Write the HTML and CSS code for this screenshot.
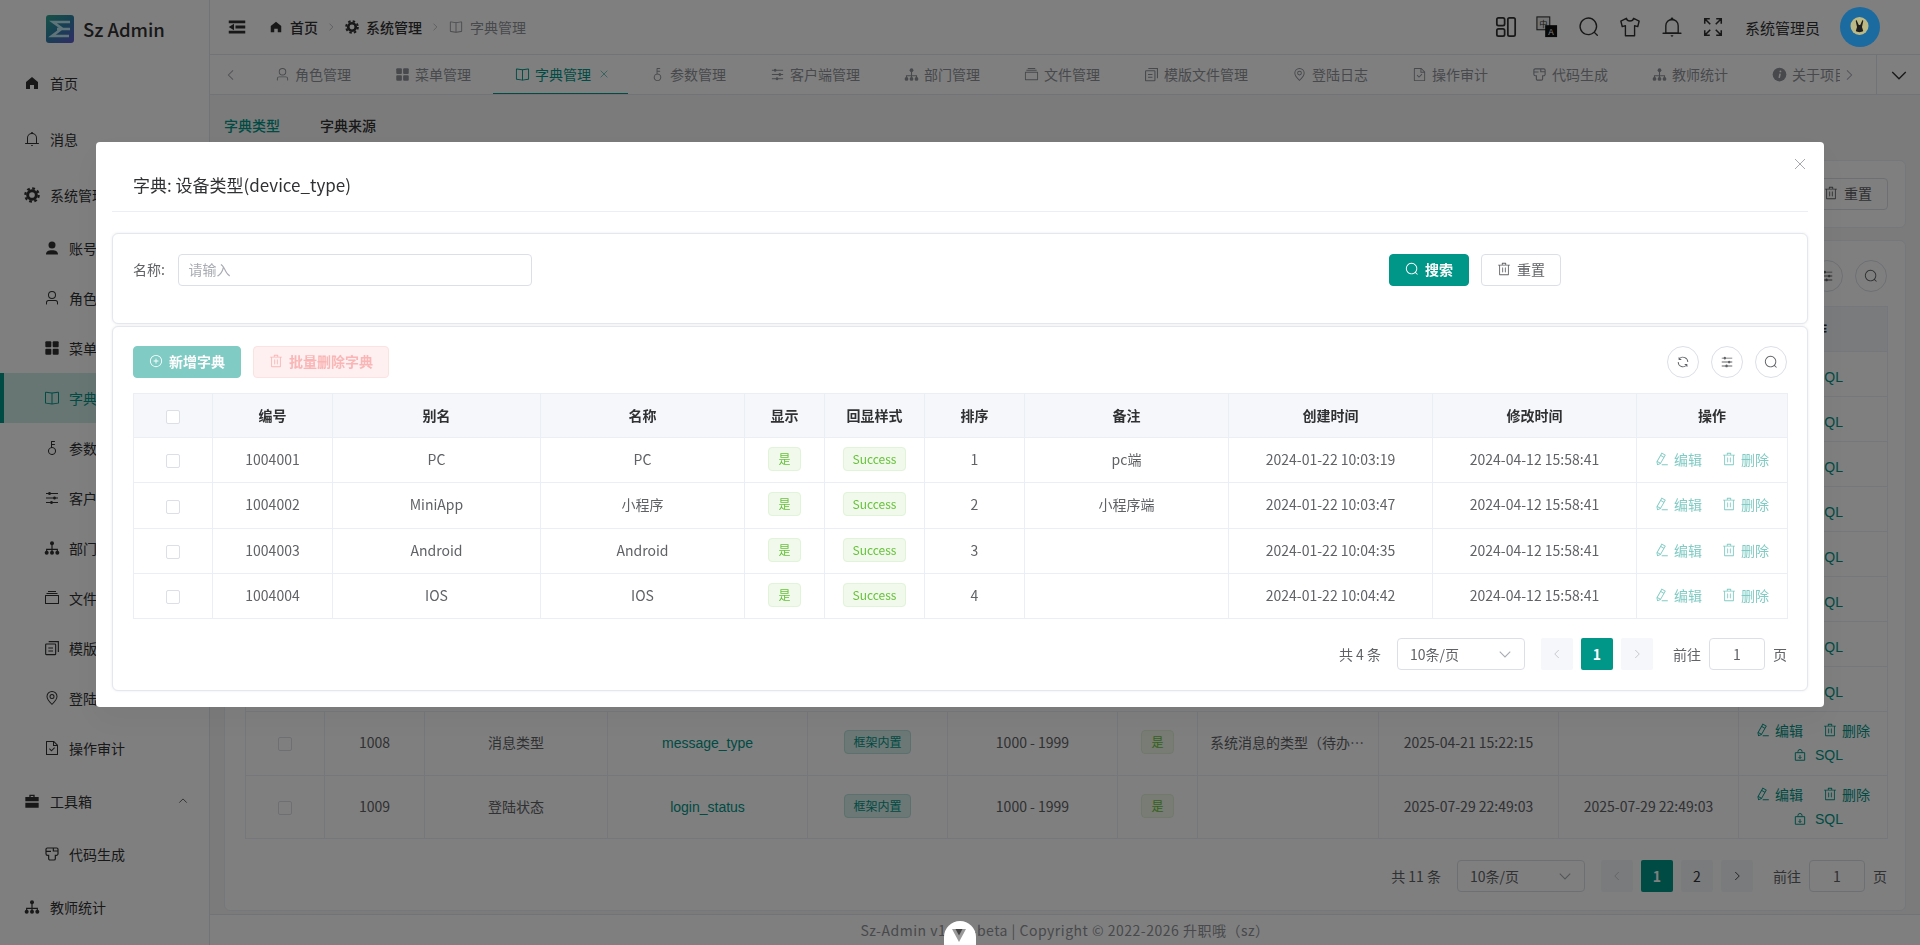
FILE: index.html
```html
<!DOCTYPE html>
<html lang="zh-CN">
<head>
  <meta charset="UTF-8" />
  <meta name="viewport" content="width=device-width, initial-scale=1.0"/>
  <title>Sz Admin - 字典管理</title>
  <link rel="stylesheet" href="styles.css">
</head>
<body>
  <svg class="sprite" xmlns="http://www.w3.org/2000/svg">
    <symbol id="i-home" viewBox="0 0 1024 1024"><path fill="currentColor" d="M512 128 128 447.936V896h255.936V640H640v256h255.936V447.936z"/></symbol>
    <symbol id="i-bell" viewBox="0 0 1024 1024"><path fill="currentColor" d="M512 64a64 64 0 0 1 64 64v64H448v-64a64 64 0 0 1 64-64"/><path fill="currentColor" d="M256 768h512V448a256 256 0 1 0-512 0zm256-640a320 320 0 0 1 320 320v384H192V448a320 320 0 0 1 320-320"/><path fill="currentColor" d="M96 768h832q32 0 32 32t-32 32H96q-32 0-32-32t32-32m352 128h128a64 64 0 0 1-128 0"/></symbol>
    <symbol id="i-gear" viewBox="0 0 24 24"><circle cx="12" cy="12" r="6.5" fill="none" stroke="currentColor" stroke-width="4.5"/><circle cx="12" cy="12" r="10" fill="none" stroke="currentColor" stroke-width="3.4" stroke-dasharray="4.2 3.65"/></symbol>
    <symbol id="i-user-fill" viewBox="0 0 1024 1024"><path fill="currentColor" d="M288 320a224 224 0 1 0 448 0 224 224 0 1 0-448 0"/><path fill="currentColor" d="M160 928a32 32 0 0 1-32-36c16-140 120-240 384-240s368 100 384 240a32 32 0 0 1-32 36z"/></symbol>
    <symbol id="i-user" viewBox="0 0 1024 1024"><path fill="currentColor" d="M512 512a192 192 0 1 0 0-384 192 192 0 0 0 0 384m0 64a256 256 0 1 1 0-512 256 256 0 0 1 0 512m320 320v-96a96 96 0 0 0-96-96H288a96 96 0 0 0-96 96v96a32 32 0 1 1-64 0v-96a160 160 0 0 1 160-160h448a160 160 0 0 1 160 160v96a32 32 0 1 1-64 0"/></symbol>
    <symbol id="i-menu" viewBox="0 0 24 24"><g fill="currentColor"><rect x="2" y="2" width="9" height="9" rx="1.5"/><rect x="13" y="2" width="9" height="9" rx="1.5"/><rect x="2" y="13" width="9" height="9" rx="1.5"/><rect x="13" y="13" width="9" height="9" rx="1.5"/></g></symbol>
    <symbol id="i-book" viewBox="0 0 1024 1024"><path fill="currentColor" d="m512 863.36 384-54.848v-638.72L525.568 222.72a96 96 0 0 1-27.136 0L128 169.792v638.72zM137.024 106.432l370.432 52.928a32 32 0 0 0 9.088 0l370.432-52.928A64 64 0 0 1 960 169.792v638.72a64 64 0 0 1-54.976 63.36l-388.48 55.488a32 32 0 0 1-9.088 0l-388.48-55.488A64 64 0 0 1 64 808.512v-638.72a64 64 0 0 1 73.024-63.36z"/><path fill="currentColor" d="M480 192h64v704h-64z"/></symbol>
    <symbol id="i-key" viewBox="0 0 1024 1024"><path fill="currentColor" d="M448 456.064V96a32 32 0 0 1 32-32.064L672 64a32 32 0 0 1 0 64H512v128h160a32 32 0 0 1 0 64H512v128a256 256 0 1 1-64 8.064M512 896a192 192 0 1 0 0-384 192 192 0 0 0 0 384"/></symbol>
    <symbol id="i-sliders" viewBox="0 0 1024 1024"><path fill="currentColor" d="M389.44 768a96.064 96.064 0 0 1 181.12 0H896v64H570.56a96.064 96.064 0 0 1-181.12 0H128v-64zm192-288a96.064 96.064 0 0 1 181.12 0H896v64H762.56a96.064 96.064 0 0 1-181.12 0H128v-64zm-320-288a96.064 96.064 0 0 1 181.12 0H896v64H442.56a96.064 96.064 0 0 1-181.12 0H128v-64z"/></symbol>
    <symbol id="i-dept" viewBox="0 0 24 24"><g fill="currentColor"><circle cx="12" cy="5" r="3"/><circle cx="4" cy="19" r="3"/><circle cx="12" cy="19" r="3"/><circle cx="20" cy="19" r="3"/></g><path d="M12 7v10M4 17v-3h16v3" fill="none" stroke="currentColor" stroke-width="1.8"/></symbol>
    <symbol id="i-files" viewBox="0 0 1024 1024"><path fill="currentColor" d="M128 384v448h768V384zm-32-64h832a32 32 0 0 1 32 32v512a32 32 0 0 1-32 32H96a32 32 0 0 1-32-32V352a32 32 0 0 1 32-32m64-128h704v64H160zm96-128h512v64H256z"/></symbol>
    <symbol id="i-template" viewBox="0 0 24 24"><g fill="none" stroke="currentColor" stroke-width="1.7"><rect x="2.5" y="6" width="15" height="16" rx="1"/><path d="M7 2.5h14.5V18M6.5 12h7M6.5 16.5h7"/></g></symbol>
    <symbol id="i-pin" viewBox="0 0 1024 1024"><path fill="currentColor" d="M800 416a288 288 0 1 0-576 0c0 118.144 94.528 272.128 288 456.576C705.472 688.128 800 534.144 800 416M512 960C277.312 746.688 160 565.312 160 416a352 352 0 0 1 704 0c0 149.312-117.312 330.688-352 544"/><path fill="currentColor" d="M512 512a96 96 0 1 0 0-192 96 96 0 0 0 0 192m0 64a160 160 0 1 1 0-320 160 160 0 0 1 0 320"/></symbol>
    <symbol id="i-doc" viewBox="0 0 1024 1024"><path fill="currentColor" d="M805.504 320 640 154.496V320zM832 384H576V128H192v768h640zM160 64h480l256 256v608a32 32 0 0 1-32 32H160a32 32 0 0 1-32-32V96a32 32 0 0 1 32-32m318.4 582.144 180.992-180.992L704.64 510.4 478.4 736.64 320 578.304l45.248-45.312z"/></symbol>
    <symbol id="i-case" viewBox="0 0 24 24"><path fill="currentColor" d="M8 6V2.5h8V6h6v6.5H2V6zm2-1.500V6h4V4.500zM2 14.500h20V22H2z"/></symbol>
    <symbol id="i-code" viewBox="0 0 24 24"><path fill="none" stroke="currentColor" stroke-width="1.8" d="M3 8.500V5a2 2 0 0 1 2-2h14a2 2 0 0 1 2 2v6.500a2.500 2.500 0 0 1-2.500 2.500H17v5a2 2 0 0 1-2 2H9a2 2 0 0 1-2-2v-5H5.500A2.500 2.500 0 0 1 3 11.500zM3 8h7.500M14 3v4.500h7"/></symbol>
    <symbol id="i-info" viewBox="0 0 24 24"><circle cx="12" cy="12" r="11" fill="currentColor"/><path d="M13 10.500l-1.500 7" stroke="#fff" stroke-width="2.4" fill="none"/><circle cx="13.500" cy="7" r="1.500" fill="#fff"/></symbol>
    <symbol id="i-search" viewBox="0 0 1024 1024"><path fill="currentColor" d="m795.904 750.72 124.992 124.928a32 32 0 0 1-45.248 45.248L750.656 795.904a416 416 0 1 1 45.248-45.248zM480 832a352 352 0 1 0 0-704 352 352 0 0 0 0 704"/></symbol>
    <symbol id="i-delete" viewBox="0 0 1024 1024"><path fill="currentColor" d="M160 256H96a32 32 0 0 1 0-64h256V95.936a32 32 0 0 1 32-32h256a32 32 0 0 1 32 32V192h256a32 32 0 1 1 0 64h-64v672a32 32 0 0 1-32 32H192a32 32 0 0 1-32-32zm448-64v-64H416v64zM224 896h576V256H224zm192-128a32 32 0 0 1-32-32V416a32 32 0 0 1 64 0v320a32 32 0 0 1-32 32m192 0a32 32 0 0 1-32-32V416a32 32 0 0 1 64 0v320a32 32 0 0 1-32 32"/></symbol>
    <symbol id="i-pen" viewBox="0 0 1024 1024"><path fill="currentColor" d="m199.04 672.64 193.984 112 224-387.968-193.92-112-224 388.032zm-23.872 60.16 32.896 148.288 144.896-45.696zM455.04 229.248l193.92 112 56.704-98.112-193.984-112-56.64 98.112zM104.32 708.8l384-665.024 304.768 175.936L409.152 884.8h.064l-248.448 78.336zm384 254.272v-64h448v64h-448z"/></symbol>
    <symbol id="i-plus" viewBox="0 0 1024 1024"><path fill="currentColor" d="M352 480h320a32 32 0 1 1 0 64H352a32 32 0 0 1 0-64"/><path fill="currentColor" d="M480 672V352a32 32 0 1 1 64 0v320a32 32 0 0 1-64 0"/><path fill="currentColor" d="M512 896a384 384 0 1 0 0-768 384 384 0 0 0 0 768m0 64a448 448 0 1 1 0-896 448 448 0 0 1 0 896"/></symbol>
    <symbol id="i-refresh" viewBox="0 0 1024 1024"><path fill="currentColor" d="M771.776 794.88A384 384 0 0 1 128 512h64a320 320 0 0 0 555.712 216.448H654.72a32 32 0 1 1 0-64h149.056a32 32 0 0 1 32 32v148.928a32 32 0 1 1-64 0v-50.56zM276.288 295.616h92.992a32 32 0 0 1 0 64H220.16a32 32 0 0 1-32-32V178.56a32 32 0 0 1 64 0v50.56A384 384 0 0 1 896.128 512h-64a320 320 0 0 0-555.776-216.384z"/></symbol>
    <symbol id="i-bag" viewBox="0 0 24 24"><path fill="none" stroke="currentColor" stroke-width="1.7" d="M4 8h16v13H4zM8.500 8V6a3.500 3.500 0 0 1 7 0v2M12 12v6M9.500 15.500 12 18l2.500-2.500"/></symbol>
    <symbol id="i-left" viewBox="0 0 24 24"><path fill="none" stroke="currentColor" stroke-width="1.8" d="M15.500 4 7.500 12l8 8"/></symbol>
    <symbol id="i-right" viewBox="0 0 24 24"><path fill="none" stroke="currentColor" stroke-width="1.8" d="M8.500 4l8 8-8 8"/></symbol>
    <symbol id="i-down" viewBox="0 0 24 24"><path fill="none" stroke="currentColor" stroke-width="1.8" d="M3 8l9 9 9-9"/></symbol>
    <symbol id="i-up" viewBox="0 0 24 24"><path fill="none" stroke="currentColor" stroke-width="1.8" d="M3 16l9-9 9 9"/></symbol>
    <symbol id="i-close" viewBox="0 0 24 24"><path fill="none" stroke="currentColor" stroke-width="1.6" d="M2 2l20 20M22 2 2 22"/></symbol>
    <symbol id="i-fold" viewBox="0 0 24 24" preserveAspectRatio="none"><path fill="currentColor" d="M1 1h22v4.500H1zM10 9.500h13v5H10zM1 18.500h22V23H1zM8 6.500v11L1 12z"/></symbol>
    <symbol id="i-layout" viewBox="0 0 24 24"><g fill="none" stroke="currentColor" stroke-width="1.9"><rect x="2" y="2" width="8.500" height="8.500" rx="1.800"/><rect x="2" y="14" width="8.500" height="8" rx="1.800"/><rect x="14" y="2" width="8" height="20" rx="1.800"/></g></symbol>
    <symbol id="i-shirt" viewBox="0 0 24 24"><path fill="none" stroke="currentColor" stroke-width="1.5" stroke-linejoin="round" d="M8 2.500 2 5.500l1.500 6L7 10.500V21.500h10V10.500l3.500 1 1.500-6-6-3c-.5 2-2 3-4 3s-3.500-1-4-3z"/></symbol>
    <symbol id="i-full" viewBox="0 0 24 24"><path fill="none" stroke="currentColor" stroke-width="1.7" d="M3 8.500V3h5.500M3 3l6 6M15.500 3H21v5.500M21 3l-6 6M3 15.500V21h5.500M3 21l6-6M21 15.500V21h-5.500M21 21l-6-6"/></symbol>
  </svg>

  <div class="layout">
    <aside class="sidebar">
      <div class="logo">
        <svg class="logo-mark" viewBox="0 0 28 28">
          <defs><linearGradient id="logo-grad" x1="0" y1="0" x2="0.8" y2="1"><stop offset="0" stop-color="#2fa58c"/><stop offset="0.55" stop-color="#2f7fa8"/><stop offset="1" stop-color="#5a60c8"/></linearGradient></defs>
          <rect width="28" height="28" rx="3" fill="url(#logo-grad)"/>
          <path d="M24 7H7l9 6.500L6 21h17M11 14h13" fill="none" stroke="#bfeaf5" stroke-width="2.600"/>
        </svg>
        <span class="logo-text">Sz Admin</span>
      </div>
      <nav class="menu">
        <a class="menu-item"><svg class="ico"><use href="#i-home"/></svg>首页</a>
        <a class="menu-item"><svg class="ico"><use href="#i-bell"/></svg>消息</a>
        <a class="menu-item"><svg class="ico"><use href="#i-gear"/></svg>系统管理<svg class="ico-sm caret"><use href="#i-up"/></svg></a>
        <a class="menu-sub"><svg class="ico"><use href="#i-user-fill"/></svg>账号管理</a>
        <a class="menu-sub"><svg class="ico"><use href="#i-user"/></svg>角色管理</a>
        <a class="menu-sub"><svg class="ico"><use href="#i-menu"/></svg>菜单管理</a>
        <a class="menu-sub active"><svg class="ico"><use href="#i-book"/></svg>字典管理</a>
        <a class="menu-sub"><svg class="ico"><use href="#i-key"/></svg>参数管理</a>
        <a class="menu-sub"><svg class="ico"><use href="#i-sliders"/></svg>客户端管理</a>
        <a class="menu-sub"><svg class="ico"><use href="#i-dept"/></svg>部门管理</a>
        <a class="menu-sub"><svg class="ico"><use href="#i-files"/></svg>文件管理</a>
        <a class="menu-sub"><svg class="ico"><use href="#i-template"/></svg>模版文件管理</a>
        <a class="menu-sub"><svg class="ico"><use href="#i-pin"/></svg>登陆日志</a>
        <a class="menu-sub"><svg class="ico"><use href="#i-doc"/></svg>操作审计</a>
        <a class="menu-item"><svg class="ico"><use href="#i-case"/></svg>工具箱<svg class="ico-sm caret"><use href="#i-up"/></svg></a>
        <a class="menu-sub"><svg class="ico"><use href="#i-code"/></svg>代码生成</a>
        <a class="menu-item"><svg class="ico"><use href="#i-dept"/></svg>教师统计</a>
      </nav>
    </aside>

    <div class="main">
      <header class="topbar">
        <svg class="fold"><use href="#i-fold"/></svg>
        <div class="crumb">
          <svg class="ico-sm"><use href="#i-home"/></svg><span>首页</span>
          <svg class="crumb-sep"><use href="#i-right"/></svg>
          <svg class="ico-sm"><use href="#i-gear"/></svg><span>系统管理</span>
          <svg class="crumb-sep"><use href="#i-right"/></svg>
          <svg class="ico-sm crumb-book"><use href="#i-book"/></svg><span class="crumb-last">字典管理</span>
        </div>
        <div class="tools">
          <span class="tool"><svg class="tool-ico"><use href="#i-layout"/></svg></span>
          <span class="tool">
            <svg class="tool-ico" viewBox="0 0 24 24">
              <rect x="1" y="1" width="14" height="14" fill="#e8e8e8" stroke="#333" stroke-width="1.2"/>
              <text x="8" y="11.5" font-size="9" text-anchor="middle" fill="#333" font-family="Noto Sans CJK SC">中</text>
              <rect x="10" y="10" width="13" height="13" fill="#111"/>
              <text x="16.5" y="20.5" font-size="9" text-anchor="middle" fill="#fff" font-family="Liberation Sans">A</text>
            </svg>
          </span>
          <span class="tool"><svg class="tool-ico"><use href="#i-search"/></svg></span>
          <span class="tool"><svg class="tool-ico"><use href="#i-shirt"/></svg></span>
          <span class="tool"><svg class="tool-ico"><use href="#i-bell"/></svg></span>
          <span class="tool"><svg class="tool-ico"><use href="#i-full"/></svg></span>
        </div>
        <span class="username">系统管理员</span>
        <svg class="avatar" viewBox="0 0 40 40">
          <circle cx="20" cy="20" r="20" fill="#1c6ba0"/>
          <circle cx="19.5" cy="19" r="9" fill="#bdb985"/>
          <path d="M16.500 13l2.300 5h1.400l2.300-5 .8.8-1.300 6.200 1.200 4c-1.800 1.500-5.600 1.500-7.400 0l1.200-4-1.300-6.200z" fill="#1e1e1e"/>
        </svg>
      </header>

      <div class="tabs">
        <span class="tab-arrow"><svg class="ico-sm"><use href="#i-left"/></svg></span>
        <div class="tab-list">
          <a class="tab"><svg class="ico-tab"><use href="#i-user"/></svg>角色管理</a>
          <a class="tab"><svg class="ico-tab"><use href="#i-menu"/></svg>菜单管理</a>
          <a class="tab on"><svg class="ico-tab"><use href="#i-book"/></svg>字典管理<svg class="tab-x"><use href="#i-close"/></svg></a>
          <a class="tab"><svg class="ico-tab"><use href="#i-key"/></svg>参数管理</a>
          <a class="tab"><svg class="ico-tab"><use href="#i-sliders"/></svg>客户端管理</a>
          <a class="tab"><svg class="ico-tab"><use href="#i-dept"/></svg>部门管理</a>
          <a class="tab"><svg class="ico-tab"><use href="#i-files"/></svg>文件管理</a>
          <a class="tab"><svg class="ico-tab"><use href="#i-template"/></svg>模版文件管理</a>
          <a class="tab"><svg class="ico-tab"><use href="#i-pin"/></svg>登陆日志</a>
          <a class="tab"><svg class="ico-tab"><use href="#i-doc"/></svg>操作审计</a>
          <a class="tab"><svg class="ico-tab"><use href="#i-code"/></svg>代码生成</a>
          <a class="tab"><svg class="ico-tab"><use href="#i-dept"/></svg>教师统计</a>
          <a class="tab"><svg class="ico-tab"><use href="#i-info"/></svg>关于项目</a>
        </div>
        <span class="tab-next"><svg class="ico-sm"><use href="#i-right"/></svg></span>
        <span class="tab-more"><svg class="ico-md"><use href="#i-down"/></svg></span>
      </div>

      <section class="content">
        <div class="subtabs">
          <span class="subtab on">字典类型</span>
          <span class="subtab">字典来源</span>
        </div>

        <div class="card page-search">
          <button class="btn primary"><svg class="ico-btn"><use href="#i-search"/></svg>搜索</button>
          <button class="btn"><svg class="ico-btn"><use href="#i-delete"/></svg>重置</button>
        </div>

        <div class="card page-table">
          <div class="table-tools">
            <button class="round"><svg class="ico-btn"><use href="#i-refresh"/></svg></button>
            <button class="round"><svg class="ico-btn"><use href="#i-sliders"/></svg></button>
            <button class="round"><svg class="ico-btn"><use href="#i-search"/></svg></button>
          </div>
          <table class="grid page-grid">
            <colgroup><col class="p1"><col class="p2"><col class="p3"><col class="p4"><col class="p5"><col class="p6"><col class="p7"><col class="p8"><col class="p9"><col class="p9"><col class="p10"></colgroup>
            <tr class="head-row"><th></th><th>编号</th><th>字典名称</th><th>字典类型</th><th>字典分类</th><th>范围</th><th>显示</th><th>备注</th><th>创建时间</th><th>修改时间</th><th>操作</th></tr>
            <tr class="thin"><td colspan="10"></td><td><a class="sql-link"><svg class="ico-btn"><use href="#i-bag"/></svg>SQL</a></td></tr>
            <tr class="thin"><td colspan="10"></td><td><a class="sql-link"><svg class="ico-btn"><use href="#i-bag"/></svg>SQL</a></td></tr>
            <tr class="thin"><td colspan="10"></td><td><a class="sql-link"><svg class="ico-btn"><use href="#i-bag"/></svg>SQL</a></td></tr>
            <tr class="thin"><td colspan="10"></td><td><a class="sql-link"><svg class="ico-btn"><use href="#i-bag"/></svg>SQL</a></td></tr>
            <tr class="thin"><td colspan="10"></td><td><a class="sql-link"><svg class="ico-btn"><use href="#i-bag"/></svg>SQL</a></td></tr>
            <tr class="thin"><td colspan="10"></td><td><a class="sql-link"><svg class="ico-btn"><use href="#i-bag"/></svg>SQL</a></td></tr>
            <tr class="thin"><td colspan="10"></td><td><a class="sql-link"><svg class="ico-btn"><use href="#i-bag"/></svg>SQL</a></td></tr>
            <tr class="thin"><td colspan="10"></td><td><a class="sql-link"><svg class="ico-btn"><use href="#i-bag"/></svg>SQL</a></td></tr>
            <tr class="tall">
              <td><span class="check"></span></td><td>1008</td><td>消息类型</td><td class="code">message_type</td>
              <td><span class="tag tag-main">框架内置</span></td><td>1000 - 1999</td><td><span class="tag">是</span></td>
              <td class="note">系统消息的类型（待办消息、公告消息）</td><td>2025-04-21 15:22:15</td><td></td>
              <td><div class="ops dark"><a><svg class="ico-btn"><use href="#i-pen"/></svg>编辑</a><a><svg class="ico-btn"><use href="#i-delete"/></svg>删除</a></div><a class="sql-link"><svg class="ico-btn"><use href="#i-bag"/></svg>SQL</a></td>
            </tr>
            <tr class="tall">
              <td><span class="check"></span></td><td>1009</td><td>登陆状态</td><td class="code">login_status</td>
              <td><span class="tag tag-main">框架内置</span></td><td>1000 - 1999</td><td><span class="tag">是</span></td>
              <td class="note"></td><td>2025-07-29 22:49:03</td><td>2025-07-29 22:49:03</td>
              <td><div class="ops dark"><a><svg class="ico-btn"><use href="#i-pen"/></svg>编辑</a><a><svg class="ico-btn"><use href="#i-delete"/></svg>删除</a></div><a class="sql-link"><svg class="ico-btn"><use href="#i-bag"/></svg>SQL</a></td>
            </tr>
          </table>
          <div class="pager page-pager">
            <span>共 11 条</span>
            <div class="pg-select">10条/页<svg class="ico-sm"><use href="#i-down"/></svg></div>
            <div class="pg-btns">
              <span class="pg off"><svg class="ico-xs"><use href="#i-left"/></svg></span>
              <span class="pg on">1</span>
              <span class="pg">2</span>
              <span class="pg"><svg class="ico-xs"><use href="#i-right"/></svg></span>
            </div>
            <span class="pg-go">前往</span>
            <span class="pg-input">1</span>
            <span>页</span>
          </div>
        </div>
      </section>

      <footer class="footer">Sz-Admin v1.2.0-beta | Copyright © 2022-2026 升职哦（sz）</footer>
    </div>
  </div>

  <div class="overlay"></div>

  <div class="dialog">
    <svg class="dialog-close"><use href="#i-close"/></svg>
    <div class="dialog-title">字典: 设备类型(device_type)</div>

    <div class="card dlg-search">
      <label class="field-label">名称:</label>
      <div class="field-input">请输入</div>
      <div class="dlg-actions">
        <button class="btn primary"><svg class="ico-btn"><use href="#i-search"/></svg>搜索</button>
        <button class="btn"><svg class="ico-btn"><use href="#i-delete"/></svg>重置</button>
      </div>
    </div>

    <div class="card dlg-table">
      <div class="toolbar">
        <div class="toolbar-left">
          <button class="btn primary faded"><svg class="ico-btn"><use href="#i-plus"/></svg>新增字典</button>
          <button class="btn danger"><svg class="ico-btn"><use href="#i-delete"/></svg>批量删除字典</button>
        </div>
        <div class="toolbar-right">
          <button class="round"><svg class="ico-btn"><use href="#i-refresh"/></svg></button>
          <button class="round"><svg class="ico-btn"><use href="#i-sliders"/></svg></button>
          <button class="round"><svg class="ico-btn"><use href="#i-search"/></svg></button>
        </div>
      </div>

      <table class="grid dlg-grid">
        <colgroup><col class="c1"><col class="c2"><col class="c3"><col class="c4"><col class="c5"><col class="c6"><col class="c6"><col class="c4"><col class="c4"><col class="c4"><col class="c7"></colgroup>
        <tr class="head-row"><th><span class="check"></span></th><th>编号</th><th>别名</th><th>名称</th><th>显示</th><th>回显样式</th><th>排序</th><th>备注</th><th>创建时间</th><th>修改时间</th><th>操作</th></tr>
        <tr>
          <td><span class="check"></span></td><td>1004001</td><td>PC</td><td>PC</td><td><span class="tag">是</span></td><td><span class="tag">Success</span></td><td>1</td><td>pc端</td><td>2024-01-22 10:03:19</td><td>2024-04-12 15:58:41</td>
          <td><div class="ops"><a><svg class="ico-btn"><use href="#i-pen"/></svg>编辑</a><a><svg class="ico-btn"><use href="#i-delete"/></svg>删除</a></div></td>
        </tr>
        <tr>
          <td><span class="check"></span></td><td>1004002</td><td>MiniApp</td><td>小程序</td><td><span class="tag">是</span></td><td><span class="tag">Success</span></td><td>2</td><td>小程序端</td><td>2024-01-22 10:03:47</td><td>2024-04-12 15:58:41</td>
          <td><div class="ops"><a><svg class="ico-btn"><use href="#i-pen"/></svg>编辑</a><a><svg class="ico-btn"><use href="#i-delete"/></svg>删除</a></div></td>
        </tr>
        <tr>
          <td><span class="check"></span></td><td>1004003</td><td>Android</td><td>Android</td><td><span class="tag">是</span></td><td><span class="tag">Success</span></td><td>3</td><td></td><td>2024-01-22 10:04:35</td><td>2024-04-12 15:58:41</td>
          <td><div class="ops"><a><svg class="ico-btn"><use href="#i-pen"/></svg>编辑</a><a><svg class="ico-btn"><use href="#i-delete"/></svg>删除</a></div></td>
        </tr>
        <tr>
          <td><span class="check"></span></td><td>1004004</td><td>IOS</td><td>IOS</td><td><span class="tag">是</span></td><td><span class="tag">Success</span></td><td>4</td><td></td><td>2024-01-22 10:04:42</td><td>2024-04-12 15:58:41</td>
          <td><div class="ops"><a><svg class="ico-btn"><use href="#i-pen"/></svg>编辑</a><a><svg class="ico-btn"><use href="#i-delete"/></svg>删除</a></div></td>
        </tr>
      </table>

      <div class="pager dlg-pager">
        <span>共 4 条</span>
        <div class="pg-select">10条/页<svg class="ico-sm"><use href="#i-down"/></svg></div>
        <div class="pg-btns">
          <span class="pg off"><svg class="ico-xs"><use href="#i-left"/></svg></span>
          <span class="pg on">1</span>
          <span class="pg off"><svg class="ico-xs"><use href="#i-right"/></svg></span>
        </div>
        <span class="pg-go">前往</span>
        <span class="pg-input">1</span>
        <span>页</span>
      </div>
    </div>
  </div>

  <div class="vue-btn">
    <svg viewBox="0 0 14 13"><path d="M0 0h14L7 13z" fill="#9a9a9a"/><path d="M3.5 0h7L7 6.500z" fill="#444"/></svg>
  </div>
</body>
</html>
```

FILE: styles.css
```css
* {
  box-sizing: border-box;
}
html, body {
  margin: 0;
  height: 945px;
  overflow: hidden;
}
body {
  font-family: "Noto Sans CJK SC", "Noto Sans", sans-serif;
  font-size: 14px;
  color: #606266;
  background: #fff;
}
.sprite {
  display: none;
}
button {
  font-family: inherit;
  font-size: 14px;
}
a {
  color: inherit;
}

/* icon sizes */
.ico { width: 16px; height: 16px; flex: none; }
.ico-sm { width: 14px; height: 14px; flex: none; }
.ico-xs { width: 12px; height: 12px; flex: none; }
.ico-md { width: 18px; height: 18px; flex: none; }
.ico-btn { width: 14px; height: 14px; flex: none; }
.ico-tab { width: 15px; height: 15px; flex: none; margin-right: 5px; }

/* layout */
.layout {
  display: flex;
  height: 945px;
}
.sidebar {
  width: 210px;
  flex: none;
  border-right: 1px solid #e4e7ed;
  color: #303133;
}
.logo {
  display: flex;
  align-items: center;
  gap: 9px;
  height: 55px;
  padding-left: 46px;
  padding-top: 3px;
}
.logo-mark {
  width: 28px;
  height: 28px;
}
.logo-text {
  font-size: 18.5px;
  font-weight: 500;
  color: #303133;
}
.menu-item {
  display: flex;
  align-items: center;
  gap: 10px;
  height: 56px;
  padding-left: 24px;
}
.menu-sub {
  display: flex;
  align-items: center;
  gap: 9px;
  height: 50px;
  padding-left: 44px;
}
.menu-sub.active {
  background: #cfeae7;
  color: #009688;
  border-left: 4px solid #009688;
  padding-left: 40px;
}
.caret {
  width: 10px;
  height: 10px;
  margin-left: auto;
  margin-right: 21px;
}

.main {
  flex: 1;
  min-width: 0;
  display: flex;
  flex-direction: column;
}

/* top bar */
.topbar {
  display: flex;
  align-items: center;
  flex: none;
  height: 55px;
  border-bottom: 1px solid #e4e7ed;
  padding: 0 40px 0 18px;
  color: #303133;
}
.fold {
  width: 18px;
  height: 14px;
  margin-right: 23px;
}
.crumb {
  display: flex;
  align-items: center;
  font-weight: 500;
}
.crumb .ico-sm {
  margin-right: 7px;
}
.crumb-sep {
  width: 10px;
  height: 14px;
  margin: 0 9px 0 8px;
  color: #a8abb2;
}
.crumb-last, .crumb-book {
  color: #909399;
  font-weight: 400;
}
.tools {
  display: flex;
  margin-left: auto;
}
.tool {
  display: flex;
  align-items: center;
  justify-content: center;
  width: 41.5px;
}
.tool-ico {
  width: 22px;
  height: 22px;
}
.username {
  margin-left: 11px;
  font-size: 15px;
}
.avatar {
  width: 40px;
  height: 40px;
  margin-left: 20px;
  position: relative;
  z-index: 2100;
}

/* tabs */
.tabs {
  display: flex;
  align-items: stretch;
  flex: none;
  height: 40px;
  border-bottom: 1px solid #e4e7ed;
  color: #909399;
}
.tab-arrow {
  width: 43px;
  display: flex;
  align-items: center;
  padding-left: 14px;
  flex: none;
  color: #a8abb2;
}
.tab-list {
  display: flex;
  flex: 1;
  overflow: hidden;
  min-width: 0;
}
.tab {
  display: flex;
  align-items: center;
  flex: none;
  height: 40px;
  padding: 0 22px;
  white-space: nowrap;
  border-bottom: 2px solid transparent;
}
.tab.on {
  color: #009688;
  border-bottom-color: #009688;
  padding-right: 20px;
}
.tab-x {
  width: 8px;
  height: 8px;
  margin-left: 9px;
}
.tab-next {
  width: 36px;
  flex: none;
  display: flex;
  align-items: center;
  color: #a8abb2;
  padding-left: 2px;
}
.tab-more {
  width: 44px;
  flex: none;
  display: flex;
  align-items: center;
  justify-content: center;
  border-left: 1px solid #e4e7ed;
  color: #303133;
}

/* page behind the dialog */
.content {
  flex: 1;
  min-height: 0;
  background: #f6f6f6;
  padding: 0 14px 3px;
}
.subtabs {
  display: flex;
  align-items: center;
  gap: 40px;
  height: 60px;
  margin-bottom: 5px;
  color: #303133;
  font-weight: 500;
}
.subtab.on {
  color: #009688;
}
.card {
  background: #fff;
  border: 1px solid #ebeef5;
  border-radius: 6px;
}
.page-search {
  display: flex;
  align-items: center;
  justify-content: flex-end;
  gap: 12px;
  height: 68px;
  padding-right: 17px;
  margin-bottom: 12px;
}
.page-table {
  height: 671px;
  padding: 19px 18px 0 20px;
}
.table-tools {
  display: flex;
  justify-content: flex-end;
  gap: 12px;
  margin-bottom: 14px;
}

/* buttons */
.btn {
  display: inline-flex;
  align-items: center;
  justify-content: center;
  gap: 6px;
  height: 32px;
  min-width: 80px;
  padding: 0 15px 2px;
  background: #fff;
  border: 1px solid #dcdfe6;
  border-radius: 4px;
  color: #606266;
}
.btn.primary {
  background: #009688;
  border-color: #009688;
  color: #fff;
  font-weight: 700;
}
.btn.primary.faded {
  background: #80cbc4;
  border-color: #80cbc4;
}
.btn.danger {
  background: #fef0f0;
  border-color: #fde2e2;
  color: #fab6b6;
  font-weight: 700;
}
.round {
  display: inline-flex;
  align-items: center;
  justify-content: center;
  width: 32px;
  height: 32px;
  padding: 0;
  background: #fff;
  border: 1px solid #dcdfe6;
  border-radius: 50%;
  color: #606266;
}

/* tables */
.grid {
  border-collapse: collapse;
  table-layout: fixed;
  width: 100%;
  border: 1px solid #ebeef5;
}
.grid th, .grid td {
  border: 1px solid #ebeef5;
  padding: 0 0 2px;
  text-align: center;
  white-space: nowrap;
}
.grid th {
  background: #f5f7fa;
  color: #303133;
  font-weight: 700;
}
.dlg-grid tr {
  height: 45.25px;
}
.dlg-grid tr.head-row {
  height: 44px;
}
.page-grid tr {
  height: 45px;
}
.page-grid tr.tall {
  height: 63.5px;
}
.page-grid tr.tall td:last-child {
  padding-bottom: 0;
}
.page-grid tr.thin td {
  padding: 8px 0 0;
}
.c1 { width: 79px; }
.c2 { width: 120px; }
.c3 { width: 208px; }
.c4 { width: 204px; }
.c5 { width: 80px; }
.c6 { width: 100px; }
.c7 { width: 151px; }
.p1 { width: 79px; }
.p2 { width: 100px; }
.p3 { width: 183px; }
.p4 { width: 200px; }
.p5 { width: 140px; }
.p6 { width: 170px; }
.p7 { width: 80px; }
.p8 { width: 181px; }
.p9 { width: 180px; }
.p10 { width: 149px; }
.check {
  display: inline-block;
  width: 14px;
  height: 14px;
  border: 1px solid #dcdfe6;
  border-radius: 2px;
  background: #fff;
  vertical-align: middle;
}
.tag {
  display: inline-block;
  height: 24px;
  line-height: 22px;
  padding: 0 9px;
  font-size: 12px;
  font-weight: 400;
  color: #67c23a;
  background: #f0f9eb;
  border: 1px solid #e1f3d8;
  border-radius: 4px;
  vertical-align: middle;
}
.tag.tag-main {
  padding: 0 8px;
  color: #009688;
  background: #d9f0ed;
  border-color: #b8e0dc;
}
.grid .code {
  font-family: "Liberation Sans", Arial, sans-serif;
  color: #009688;
  padding-bottom: 0;
}
.grid .note {
  text-align: left;
  padding: 0 12px 2px;
  overflow: hidden;
  text-overflow: ellipsis;
}
.ops {
  display: flex;
  justify-content: center;
  gap: 20px;
  color: #80cbc4;
}
.ops a {
  display: inline-flex;
  align-items: center;
  gap: 5px;
}
.ops.dark {
  color: #009688;
  margin-bottom: 6px;
}
.sql-link {
  display: inline-flex;
  align-items: center;
  gap: 8px;
  margin-left: 10px;
  color: #009688;
  font-family: "Liberation Sans", Arial, sans-serif;
}

/* pagination */
.pager {
  display: flex;
  align-items: center;
  justify-content: flex-end;
  height: 32px;
}
.dlg-pager {
  margin-top: 19px;
}
.page-pager {
  margin-top: 21px;
}
.pg-select {
  display: flex;
  align-items: center;
  justify-content: space-between;
  width: 128px;
  height: 32px;
  margin: 0 16px;
  padding: 0 12px;
  background: #fff;
  border: 1px solid #dcdfe6;
  border-radius: 4px;
}
.pg-select .ico-sm {
  color: #a8abb2;
}
.pg-btns {
  display: flex;
  gap: 8px;
}
.pg {
  display: flex;
  align-items: center;
  justify-content: center;
  width: 32px;
  height: 32px;
  background: #f5f7fa;
  border-radius: 2px;
  color: #303133;
}
.pg.off {
  color: #c0c4cc;
}
.pg.on {
  background: #009688;
  color: #fff;
  font-weight: 700;
}
.pg-go {
  margin-left: 20px;
}
.pg-input {
  width: 56px;
  height: 32px;
  line-height: 30px;
  margin: 0 8px;
  text-align: center;
  background: #fff;
  border: 1px solid #dcdfe6;
  border-radius: 4px;
}

.footer {
  flex: none;
  height: 31px;
  line-height: 31px;
  border-top: 1px solid #e4e7ed;
  text-align: center;
  color: #909399;
  letter-spacing: 0.5px;
}

/* dialog */
.overlay {
  position: fixed;
  inset: 0;
  background: rgba(0, 0, 0, 0.5);
  z-index: 2000;
}
.dialog {
  position: fixed;
  left: 96px;
  top: 142px;
  width: 1728px;
  height: 565px;
  padding: 0 16px;
  background: #fff;
  border-radius: 4px;
  z-index: 2001;
  box-shadow: 0 12px 32px 4px rgba(0, 0, 0, 0.04);
}
.dialog-close {
  position: absolute;
  right: 18px;
  top: 16px;
  width: 12px;
  height: 12px;
  color: #909399;
}
.dialog-title {
  height: 70px;
  padding: 30px 0 0 21px;
  font-size: 17px;
  line-height: 26px;
  color: #303133;
  border-bottom: 1px solid #ebeef5;
  margin-bottom: 21px;
}
.dlg-search {
  display: flex;
  align-items: flex-start;
  height: 91px;
  padding: 20px 0 0 20px;
  margin-bottom: 2px;
  border-color: #e4e7ed;
  box-shadow: 0 0 3px rgba(0, 0, 0, 0.08);
}
.field-label {
  width: 44.5px;
  line-height: 30px;
}
.field-input {
  width: 354px;
  height: 32px;
  line-height: 28px;
  padding: 0 10px;
  border: 1px solid #dcdfe6;
  border-radius: 4px;
  color: #a8abb2;
}
.dlg-actions {
  display: flex;
  gap: 12px;
  margin-left: auto;
  margin-right: 246px;
}
.dlg-table {
  height: 365px;
  padding: 19px 20px 0 20px;
  border-color: #e4e7ed;
  box-shadow: 0 0 3px rgba(0, 0, 0, 0.08);
}
.toolbar {
  display: flex;
  justify-content: space-between;
  margin-bottom: 15px;
}
.toolbar-left, .toolbar-right {
  display: flex;
  gap: 12px;
}

.vue-btn {
  position: fixed;
  left: 944px;
  top: 921px;
  width: 32px;
  height: 40px;
  border-radius: 16px;
  background: #fff;
  z-index: 2002;
  padding: 8px 8px 0;
}
.vue-btn svg {
  display: block;
  width: 14px;
  height: 13px;
}
```
